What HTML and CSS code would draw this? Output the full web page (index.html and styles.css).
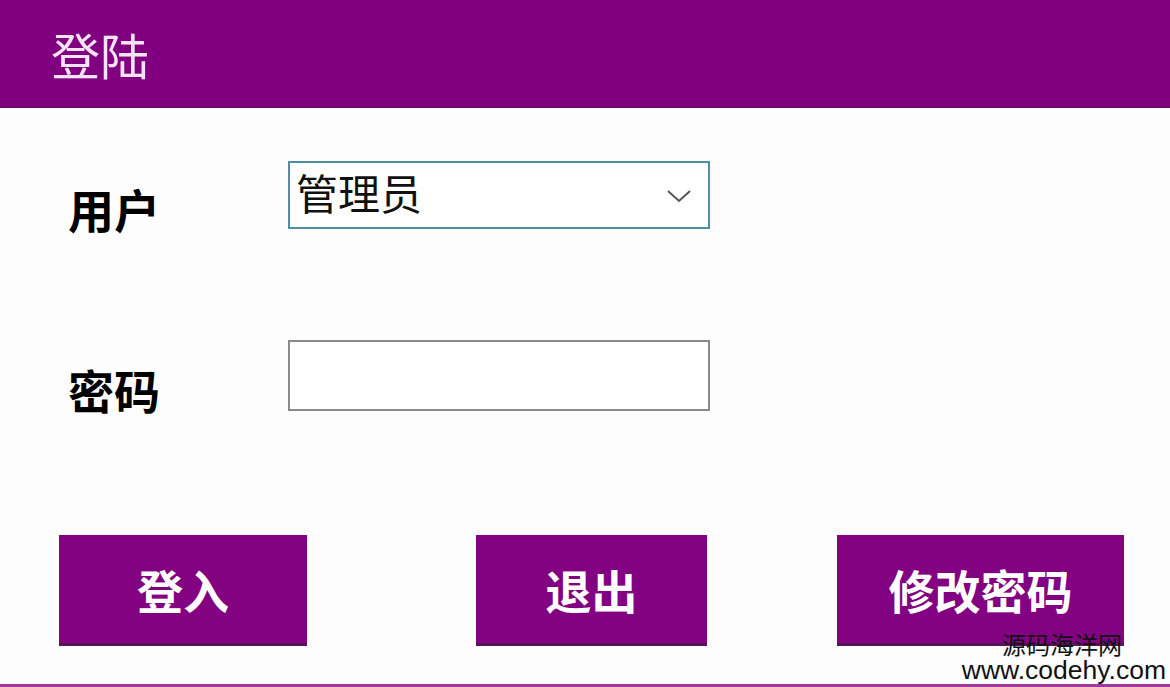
FILE: index.html
```html
<!DOCTYPE html>
<html lang="zh-CN">
<head>
    <meta charset="UTF-8">
    <meta name="viewport" content="width=device-width, initial-scale=1.0">
    <title>登陆</title>
    <link rel="stylesheet" href="styles.css">
</head>
<body>
    <div class="window">
        <div class="title-bar">登陆</div>
        <form class="login-form">
            <div class="form-row row-user">
                <label class="field-label" for="user">用户</label>
                <div class="select-box" id="user">
                    <span class="select-value">管理员</span>
                    <svg class="chevron" width="26" height="16" viewBox="0 0 26 16">
                        <polyline points="2,3 13,13 24,3" fill="none" stroke="#555" stroke-width="2"/>
                    </svg>
                </div>
            </div>
            <div class="form-row row-pass">
                <label class="field-label" for="pass">密码</label>
                <input class="text-box" type="password" id="pass">
            </div>
            <div class="button-row">
                <button type="button" class="btn btn-login">登入</button>
                <button type="button" class="btn btn-exit">退出</button>
                <button type="button" class="btn btn-change">修改密码</button>
            </div>
        </form>
        <div class="watermark">
            <div class="wm-name">源码海洋网</div>
            <div class="wm-url">www.codehy.com</div>
        </div>
        <div class="bottom-line"></div>
    </div>
</body>
</html>
```

FILE: styles.css
```css
body {
    margin: 0;
    background-color: #fdfdfd;
    font-family: "Noto Sans CJK SC", "Noto Sans", sans-serif;
}

.window {
    position: relative;
    width: 1170px;
    height: 687px;
    display: flex;
    flex-direction: column;
    overflow: hidden;
}

.title-bar {
    height: 106px;
    background-color: #800080;
    border-bottom: 2px solid #6a0a6a;
    color: #f6e4f6;
    font-size: 49px;
    line-height: 108px;
    padding-left: 51px;
}

.login-form {
    display: flex;
    flex-direction: column;
}

.form-row {
    display: flex;
    align-items: flex-start;
}

.row-user {
    margin-top: 53px;
}

.row-pass {
    margin-top: 109px;
}

.field-label {
    width: 220px;
    padding-left: 68px;
    font-size: 46px;
    line-height: 46px;
    font-weight: bold;
    color: #000;
}

.row-user .field-label {
    margin-top: 24px;
}

.row-pass .field-label {
    margin-top: 26px;
}

.select-box {
    box-sizing: border-box;
    width: 422px;
    height: 68px;
    border: 2px solid #4f8ea3;
    background-color: #fff;
    display: flex;
    align-items: center;
    justify-content: space-between;
    padding: 0 16px 0 6px;
}

.select-value {
    font-size: 42px;
    line-height: 42px;
    color: #111;
    margin-top: -6px;
}

.chevron {
    margin-top: 2px;
}

.text-box {
    box-sizing: border-box;
    width: 422px;
    height: 71px;
    border: 2px solid #8a8a8a;
    background-color: #fff;
    outline: none;
    margin: 0;
}

.button-row {
    display: flex;
    margin-top: 123px;
    padding-left: 59px;
}

.btn {
    box-sizing: border-box;
    height: 111px;
    background-color: #820282;
    border: none;
    border-bottom: 3px solid #5a105a;
    color: #fff;
    font-family: "Noto Sans CJK SC", sans-serif;
    font-size: 46px;
    font-weight: bold;
    cursor: pointer;
    padding: 0;
}

.btn-login {
    width: 248px;
}

.btn-exit {
    width: 231px;
    margin-left: 169px;
}

.btn-change {
    width: 287px;
    margin-left: 130px;
}

.watermark {
    position: absolute;
    right: 4px;
    bottom: 3px;
    text-align: right;
    color: #111;
}

.wm-name {
    font-family: "Noto Sans CJK SC", sans-serif;
    font-size: 24px;
    line-height: 27px;
    padding-right: 44px;
}

.wm-url {
    font-family: "Liberation Sans", sans-serif;
    font-size: 26.5px;
    line-height: 27px;
}

.bottom-line {
    position: absolute;
    left: 0;
    right: 0;
    bottom: 0;
    height: 3px;
    background-color: #9b3a9b;
}
```
